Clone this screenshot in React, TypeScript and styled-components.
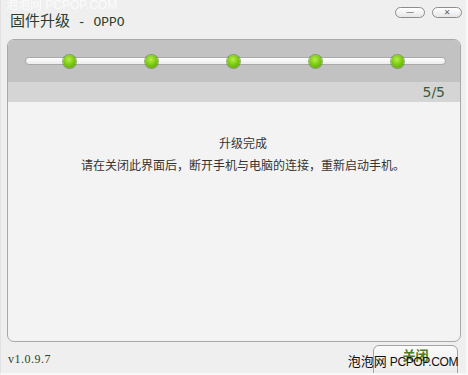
import * as React from 'react';
import styled, { createGlobalStyle } from 'styled-components';

const GlobalStyle = createGlobalStyle`
  *, *::before, *::after {
    box-sizing: border-box;
  }
  html, body {
    margin: 0;
    padding: 0;
    background: #ffffff;
  }
  body {
    font-family: "Noto Sans CJK SC", "DejaVu Sans", sans-serif;
  }
`;

const Window = styled.div`
  width: 468px;
  height: 375px;
  background: #efefef;
  border-right: 2px solid #f8f8f8;
  border-bottom: 2px solid #f8f8f8;
  border-left: 1px solid #e2e2e2;
  display: flex;
  flex-direction: column;
  position: relative;
  overflow: hidden;
`;

const Watermark = styled.div<{ $light?: boolean }>`
  position: absolute;
  font-family: "Liberation Sans", "Noto Sans CJK SC", sans-serif;
  white-space: nowrap;
  color: ${p => (p.$light ? 'rgba(255,255,255,0.8)' : '#111')};
  font-size: 12px;
  line-height: ${p => (p.$light ? '12px' : '15px')};
  letter-spacing: ${p => (p.$light ? '0' : '-0.4px')};
  ${p => (p.$light ? 'left: 5px; top: -2px;' : 'right: 8px; bottom: 3px;')}

  & b {
    font-weight: normal;
    font-family: "Noto Sans CJK SC", sans-serif;
    font-size: ${p => (p.$light ? '12px' : '13px')};
    letter-spacing: 0;
  }
`;

const TitleBar = styled.div`
  height: 39px;
  flex: none;
  display: flex;
  justify-content: space-between;
  align-items: flex-start;
  padding: 0 4px 0 9px;
`;

const Title = styled.div`
  margin-top: 11px;
  font-size: 15px;
  line-height: 18px;
  color: #2b3d2b;
  white-space: nowrap;

  & span {
    font-family: "Liberation Mono", monospace;
    font-size: 13px;
  }
`;

const WinButtons = styled.div`
  display: flex;
  gap: 7px;
  margin-top: 7px;
`;

const WinButton = styled.div`
  width: 30px;
  height: 11px;
  border: 1px solid #8c8c8c;
  border-radius: 6px;
  background: linear-gradient(#ffffff, #e6e6e6);
  display: flex;
  align-items: center;
  justify-content: center;
  font-family: "DejaVu Sans", sans-serif;
  font-size: 8px;
  line-height: 9px;
  color: #666;
`;

const Panel = styled.div`
  flex: none;
  margin: 0 5px 0 6px;
  height: 303px;
  border: 1px solid #a8a8a8;
  border-radius: 7px;
  overflow: hidden;
  display: flex;
  flex-direction: column;
  background: #f3f3f3;
`;

const StepBar = styled.div`
  height: 42px;
  flex: none;
  background: #c2c2c2;
  display: flex;
  align-items: center;
  padding: 0 14px 0 17px;
`;

const Track = styled.div`
  flex: 1;
  height: 8px;
  border: 1px solid #a9a9a9;
  border-radius: 4px;
  background: linear-gradient(#ffffff, #ececec);
  display: flex;
  align-items: center;
  gap: 69px;
  padding-left: 37px;
`;

const Dot = styled.div`
  flex: none;
  width: 13px;
  height: 13px;
  border-radius: 50%;
  background: radial-gradient(circle at 45% 35%, #b6ee4a 0%, #7fcc13 45%, #4f9a04 100%);
  box-shadow: 0 0 0 1px rgba(70, 120, 10, 0.5);
`;

const CountBand = styled.div`
  height: 20px;
  flex: none;
  background: #d5d5d5;
  display: flex;
  justify-content: flex-end;
  align-items: center;
  padding-right: 15px;
  font-family: "DejaVu Sans", sans-serif;
  font-size: 14px;
  color: #3b5a3b;
`;

const Body = styled.div`
  flex: 1;
  display: flex;
  flex-direction: column;
  align-items: center;
  padding: 33px 0 0 18px;
  gap: 6px;
  font-size: 12px;
  line-height: 16px;
  color: #333;
`;

const Footer = styled.div`
  flex: 1;
  display: flex;
  justify-content: space-between;
  align-items: flex-start;
  padding: 0 8px 0 7px;
`;

const Version = styled.div`
  margin-top: 10px;
  font-family: "Liberation Serif", serif;
  font-size: 12px;
  color: #2c452c;
  letter-spacing: 0.5px;
`;

const CloseButton = styled.div`
  margin-top: 3px;
  width: 85px;
  height: 34px;
  border: 1px solid #a3a3a3;
  border-radius: 6px;
  background: linear-gradient(#fafafa, #e9e9e9);
  display: flex;
  justify-content: center;
  padding-top: 1px;
  font-size: 13px;
  line-height: 16px;
  font-weight: bold;
  color: #4f7a2c;
`;

const steps = [1, 2, 3, 4, 5];

export default function App() {
  return (
    <Window>
      <GlobalStyle />
      <Watermark $light>
        <b>泡泡网</b> PCPOP.COM
      </Watermark>
      <TitleBar>
        <Title>
          固件升级<span> - OPPO</span>
        </Title>
        <WinButtons>
          <WinButton>—</WinButton>
          <WinButton>✕</WinButton>
        </WinButtons>
      </TitleBar>
      <Panel>
        <StepBar>
          <Track>
            {steps.map(s => (
              <Dot key={s} />
            ))}
          </Track>
        </StepBar>
        <CountBand>5/5</CountBand>
        <Body>
          <div>升级完成</div>
          <div>请在关闭此界面后，断开手机与电脑的连接，重新启动手机。</div>
        </Body>
      </Panel>
      <Footer>
        <Version>v1.0.9.7</Version>
        <CloseButton>关闭</CloseButton>
      </Footer>
      <Watermark>
        <b>泡泡网</b> PCPOP.COM
      </Watermark>
    </Window>
  );
}
